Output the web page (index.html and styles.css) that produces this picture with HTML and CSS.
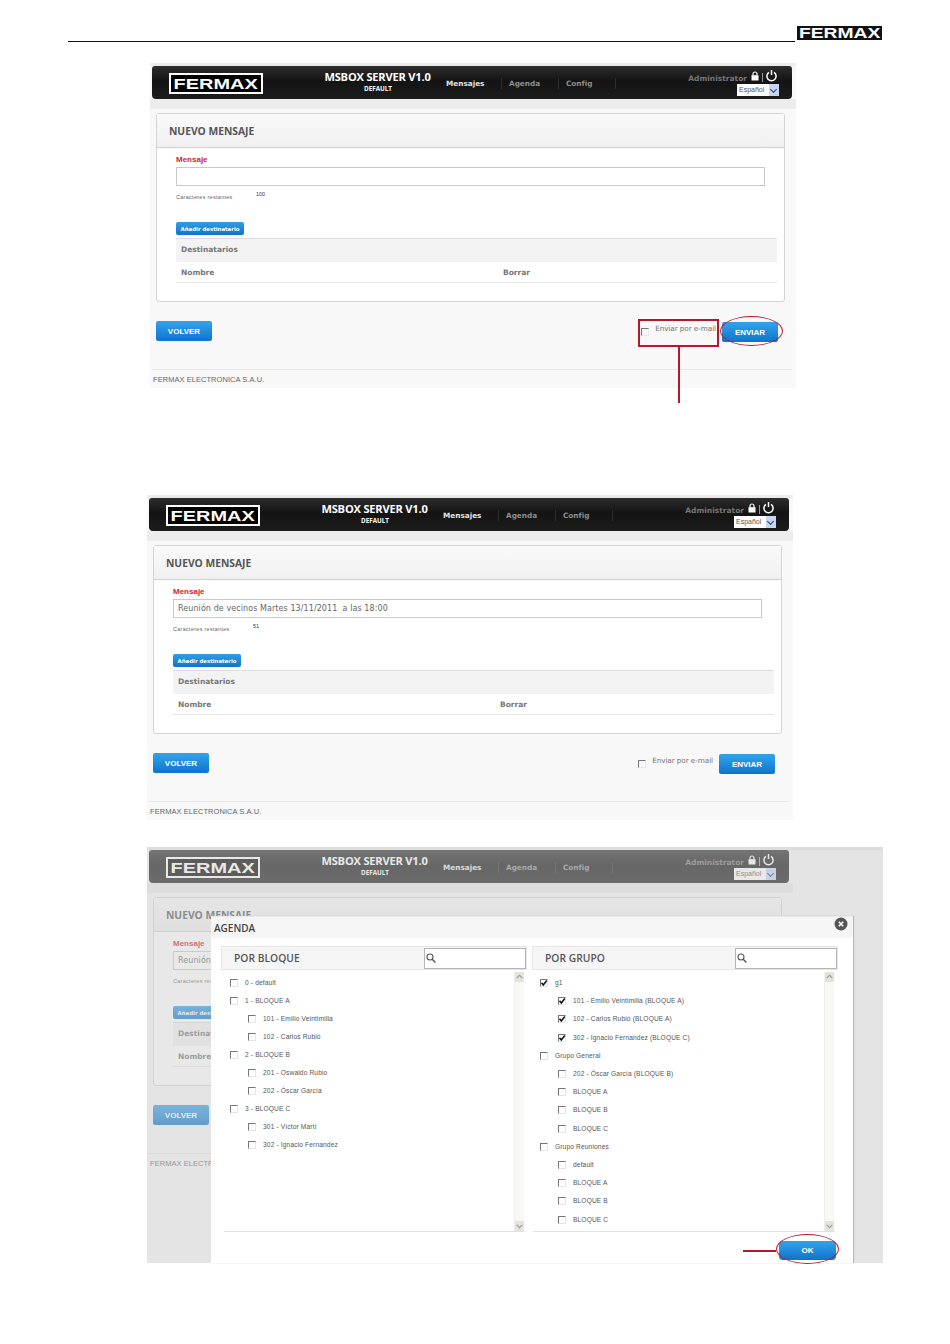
FILE: index.html
```html
<!DOCTYPE html>
<html lang="es">
<head>
<meta charset="utf-8">
<title>MSBOX SERVER</title>
<link rel="stylesheet" href="styles.css">
</head>
<body>
<header class="doc-head"><div class="doc-rule"></div><div class="doc-logo"><span class="wide">FERMAX</span></div></header>

<section class="shot shot-a">
  <div class="nav">
    <div class="logo"><span class="wide">FERMAX</span></div>
    <div class="brand"><div class="brand-name">MSBOX SERVER V1.0</div><div class="brand-sub">DEFAULT</div></div>
    <nav class="menu"><a class="menu-item active">Mensajes</a><a class="menu-item">Agenda</a><a class="menu-item">Config</a></nav>
    <div class="user">
      <div class="user-line"><span class="user-name">Administrator</span>
        <svg class="ic-lock" viewBox="0 0 8 10"><path d="M2 4.5V3a2 2 0 0 1 4 0v1.5" fill="none" stroke="#fff" stroke-width="1.2"/><rect x="0.5" y="4.2" width="7" height="5.3" fill="#fff"/></svg>
        <i class="user-sep"></i>
        <svg class="ic-power" viewBox="0 0 12 13"><path d="M3.2 3.2a5 5 0 1 0 5.6 0" fill="none" stroke="#fff" stroke-width="1.6"/><path d="M6 .5v5.5" stroke="#fff" stroke-width="1.6"/></svg>
      </div>
      <div class="lang"><span>Español</span><i class="lang-arrow"></i></div>
    </div>
  </div>
  <div class="stripe"></div>
  <div class="card">
    <div class="card-head">NUEVO MENSAJE</div>
    <div class="card-body">
      <div class="label">Mensaje</div>
      <div class="field"></div>
      <div class="count"><span class="count-label">Caracteres restantes</span><span class="count-num">100</span></div>
      <div class="btn-add">Añadir destinatario</div>
      <div class="table-head">Destinatarios</div>
      <div class="table-row"><span class="col-a">Nombre</span><span>Borrar</span></div>
    </div>
  </div>
  <div class="actions">
    <div class="btn">VOLVER</div>
    <div class="actions-right"><span class="box"></span><span class="mail">Enviar por e-mail</span><div class="btn">ENVIAR</div></div>
  </div>
  <footer class="foot">FERMAX ELECTRONICA S.A.U.</footer>
  <div class="mark-rect"></div>
  <div class="mark-line"></div>
  <div class="mark-oval"></div>
</section>

<section class="shot shot-b">
  <div class="nav">
    <div class="logo"><span class="wide">FERMAX</span></div>
    <div class="brand"><div class="brand-name">MSBOX SERVER V1.0</div><div class="brand-sub">DEFAULT</div></div>
    <nav class="menu"><a class="menu-item active">Mensajes</a><a class="menu-item">Agenda</a><a class="menu-item">Config</a></nav>
    <div class="user">
      <div class="user-line"><span class="user-name">Administrator</span>
        <svg class="ic-lock" viewBox="0 0 8 10"><path d="M2 4.5V3a2 2 0 0 1 4 0v1.5" fill="none" stroke="#fff" stroke-width="1.2"/><rect x="0.5" y="4.2" width="7" height="5.3" fill="#fff"/></svg>
        <i class="user-sep"></i>
        <svg class="ic-power" viewBox="0 0 12 13"><path d="M3.2 3.2a5 5 0 1 0 5.6 0" fill="none" stroke="#fff" stroke-width="1.6"/><path d="M6 .5v5.5" stroke="#fff" stroke-width="1.6"/></svg>
      </div>
      <div class="lang"><span>Español</span><i class="lang-arrow"></i></div>
    </div>
  </div>
  <div class="stripe"></div>
  <div class="card">
    <div class="card-head">NUEVO MENSAJE</div>
    <div class="card-body">
      <div class="label">Mensaje</div>
      <div class="field">Reunión de vecinos Martes 13/11/2011&nbsp; a las 18:00</div>
      <div class="count"><span class="count-label">Caracteres restantes</span><span class="count-num">51</span></div>
      <div class="btn-add">Añadir destinatario</div>
      <div class="table-head">Destinatarios</div>
      <div class="table-row"><span class="col-a">Nombre</span><span>Borrar</span></div>
    </div>
  </div>
  <div class="actions">
    <div class="btn">VOLVER</div>
    <div class="actions-right"><span class="box"></span><span class="mail">Enviar por e-mail</span><div class="btn">ENVIAR</div></div>
  </div>
  <footer class="foot">FERMAX ELECTRONICA S.A.U.</footer>
</section>

<section class="shot shot-c">
  <div class="nav">
    <div class="logo"><span class="wide">FERMAX</span></div>
    <div class="brand"><div class="brand-name">MSBOX SERVER V1.0</div><div class="brand-sub">DEFAULT</div></div>
    <nav class="menu"><a class="menu-item active">Mensajes</a><a class="menu-item">Agenda</a><a class="menu-item">Config</a></nav>
    <div class="user">
      <div class="user-line"><span class="user-name">Administrator</span>
        <svg class="ic-lock" viewBox="0 0 8 10"><path d="M2 4.5V3a2 2 0 0 1 4 0v1.5" fill="none" stroke="#fff" stroke-width="1.2"/><rect x="0.5" y="4.2" width="7" height="5.3" fill="#fff"/></svg>
        <i class="user-sep"></i>
        <svg class="ic-power" viewBox="0 0 12 13"><path d="M3.2 3.2a5 5 0 1 0 5.6 0" fill="none" stroke="#fff" stroke-width="1.6"/><path d="M6 .5v5.5" stroke="#fff" stroke-width="1.6"/></svg>
      </div>
      <div class="lang"><span>Español</span><i class="lang-arrow"></i></div>
    </div>
  </div>
  <div class="stripe"></div>
  <div class="card">
    <div class="card-head">NUEVO MENSAJE</div>
    <div class="card-body">
      <div class="label">Mensaje</div>
      <div class="field">Reunión de vecinos Martes 13/11/2011&nbsp; a las 18:00</div>
      <div class="count"><span class="count-label">Caracteres restantes</span><span class="count-num">51</span></div>
      <div class="btn-add">Añadir destinatario</div>
      <div class="table-head">Destinatarios</div>
      <div class="table-row"><span class="col-a">Nombre</span><span>Borrar</span></div>
    </div>
  </div>
  <div class="actions">
    <div class="btn">VOLVER</div>
  </div>
  <footer class="foot">FERMAX ELECTRONICA S.A.U.</footer>
  <div class="dim"></div>

  <div class="modal">
    <div class="modal-head">AGENDA</div>
    <svg class="modal-close" viewBox="0 0 14 14"><circle cx="7" cy="7" r="6.5" fill="#555"/><path d="M4.8 4.8l4.4 4.4M9.2 4.8l-4.4 4.4" stroke="#fff" stroke-width="1.6"/></svg>
    <div class="panels">
      <div class="panel">
        <div class="panel-head"><span>POR BLOQUE</span>
          <div class="search"><svg class="ic-search" viewBox="0 0 10 10"><circle cx="4" cy="4" r="3" fill="none" stroke="#555" stroke-width="1.1"/><path d="M6.2 6.2L9.4 9.4" stroke="#555" stroke-width="1.4"/></svg></div>
        </div>
        <div class="list">
          <div class="rows">
            <div class="row"><span class="box"></span>0 - default</div>
            <div class="row"><span class="box"></span>1 - BLOQUE A</div>
            <div class="row sub"><span class="box"></span>101 - Emilio Veintimilla</div>
            <div class="row sub"><span class="box"></span>102 - Carlos Rubió</div>
            <div class="row"><span class="box"></span>2 - BLOQUE B</div>
            <div class="row sub"><span class="box"></span>201 - Oswaldo Rubio</div>
            <div class="row sub"><span class="box"></span>202 - Óscar García</div>
            <div class="row"><span class="box"></span>3 - BLOQUE C</div>
            <div class="row sub"><span class="box"></span>301 - Víctor Martí</div>
            <div class="row sub"><span class="box"></span>302 - Ignacio Fernandez</div>
          </div>
          <div class="scroll"><i class="scroll-btn"><svg viewBox="0 0 8 8"><path d="M1.5 5L4 2.5 6.500 5" fill="none" stroke="#999"/></svg></i><i class="scroll-btn"><svg viewBox="0 0 8 8"><path d="M1.5 3L4 5.500 6.500 3" fill="none" stroke="#999"/></svg></i></div>
        </div>
      </div>
      <div class="panel panel-right">
        <div class="panel-head"><span>POR GRUPO</span>
          <div class="search"><svg class="ic-search" viewBox="0 0 10 10"><circle cx="4" cy="4" r="3" fill="none" stroke="#555" stroke-width="1.1"/><path d="M6.2 6.2L9.4 9.4" stroke="#555" stroke-width="1.4"/></svg></div>
        </div>
        <div class="list">
          <div class="rows">
            <div class="row"><span class="box on"><svg viewBox="0 0 8 8"><path d="M1.500 3.800L3.300 6 6.800 1.500" fill="none" stroke="#111" stroke-width="1.5"/></svg></span>g1</div>
            <div class="row sub"><span class="box on"><svg viewBox="0 0 8 8"><path d="M1.500 3.800L3.300 6 6.800 1.500" fill="none" stroke="#111" stroke-width="1.5"/></svg></span>101 - Emilio Veintimilla (BLOQUE A)</div>
            <div class="row sub"><span class="box on"><svg viewBox="0 0 8 8"><path d="M1.500 3.800L3.300 6 6.800 1.500" fill="none" stroke="#111" stroke-width="1.5"/></svg></span>102 - Carlos Rubió (BLOQUE A)</div>
            <div class="row sub"><span class="box on"><svg viewBox="0 0 8 8"><path d="M1.500 3.800L3.300 6 6.800 1.500" fill="none" stroke="#111" stroke-width="1.5"/></svg></span>302 - Ignacio Fernandez (BLOQUE C)</div>
            <div class="row"><span class="box"></span>Grupo General</div>
            <div class="row sub"><span class="box"></span>202 - Óscar García (BLOQUE B)</div>
            <div class="row sub"><span class="box"></span>BLOQUE A</div>
            <div class="row sub"><span class="box"></span>BLOQUE B</div>
            <div class="row sub"><span class="box"></span>BLOQUE C</div>
            <div class="row"><span class="box"></span>Grupo Reuniones</div>
            <div class="row sub"><span class="box"></span>default</div>
            <div class="row sub"><span class="box"></span>BLOQUE A</div>
            <div class="row sub"><span class="box"></span>BLOQUE B</div>
            <div class="row sub"><span class="box"></span>BLOQUE C</div>
          </div>
          <div class="scroll"><i class="scroll-btn"><svg viewBox="0 0 8 8"><path d="M1.5 5L4 2.5 6.500 5" fill="none" stroke="#999"/></svg></i><i class="scroll-btn"><svg viewBox="0 0 8 8"><path d="M1.5 3L4 5.500 6.500 3" fill="none" stroke="#999"/></svg></i></div>
        </div>
      </div>
    </div>
    <div class="modal-foot"><div class="btn">OK</div></div>
    <div class="ok-line"></div>
    <div class="ok-oval"></div>
  </div>
</section>
</body>
</html>
```
FILE: styles.css
```css
* { box-sizing: border-box; }
html, body { margin: 0; padding: 0; background: #fff; }
body { height: 1344px; overflow: hidden; padding-top: 26px; font-family: "Liberation Sans", Arial, sans-serif; color: #555; }

.wide { display: inline-block; transform: scaleX(1.33); transform-origin: center; white-space: nowrap; }

.doc-head { display: flex; width: 814px; height: 16px; margin-left: 68px; }
.doc-rule { flex: 1; border-bottom: 1px solid #111; margin-right: 2px; }
.doc-logo { width: 85px; height: 14px; background: #111; color: #fff; font: bold 14.500px/14px "Liberation Sans", sans-serif; text-align: center; overflow: hidden; }

.shot { position: relative; width: 646px; height: 325px; padding-top: 3px; background: #f8f8f8; box-shadow: inset 0 3px 0 #ececec; }
.shot-a { margin: 21px 0 0 150px; }
.shot-b { margin: 107px 0 0 147px; }
.shot-c { margin: 27px 0 0 147px; width: 736px; height: 416px; }

.nav { display: flex; align-items: flex-start; width: 640px; height: 33px; margin-left: 2px; padding-left: 17px; border-radius: 3px 3px 4px 4px; background: linear-gradient(#2d2d2d, #141414 45%, #1c1c1c); color: #fff; }
.logo { width: 94px; height: 21px; margin-top: 7px; border: 2px solid #fff; background: #000; font: bold 15px/17px "Liberation Sans", sans-serif; text-align: center; white-space: nowrap; }
.brand { width: 106px; margin: 4px 0 0 62px; text-align: center; }
.brand-name { font: 700 11.100px/14px "Open Sans", sans-serif; white-space: nowrap; letter-spacing: -.2px; margin-left: -1px; }
.brand-sub { font: 700 6.300px/9px "Open Sans", sans-serif; }
.menu { display: flex; margin: 12px 0 0 15px; }
.menu-item { width: 50px; padding-right: 5px; font: bold 7.300px/11px "DejaVu Sans", sans-serif; color: #8d8d8d; white-space: nowrap; border-right: 1px solid #2e2e2e; margin-right: 7px; }
.menu-item.active { width: 56px; color: #e4e4e4; }
.user { margin-left: auto; padding: 3px 13px 0 0; display: flex; flex-direction: column; align-items: flex-end; }
.user-line { display: flex; align-items: flex-end; height: 14px; margin-right: 2px; }
.user-name { font: bold 7.500px/9px "DejaVu Sans", sans-serif; color: #777; }
.ic-lock { width: 8px; height: 10px; margin: 0 0 2px 4px; }
.user-sep { width: 1px; height: 9px; margin: 0 3px 1px; background: #999; }
.ic-power { width: 11px; height: 13px; margin-bottom: 1px; }
.lang { display: flex; align-items: center; justify-content: space-between; width: 42px; height: 12px; margin-top: 1px; background: #fff; color: #555; font: 7px/12px "Liberation Sans", sans-serif; padding-left: 2px; }
.lang-arrow { width: 10px; height: 12px; background: #c6d6f2; position: relative; }
.lang-arrow::after { content: ""; position: absolute; left: 2px; top: 3px; width: 4px; height: 4px; border-right: 1.500px solid #27408b; border-bottom: 1.500px solid #27408b; transform: rotate(45deg); }
.stripe { width: 646px; height: 10px; background: #ececec; }

.card { width: 629px; height: 189px; margin: 4px 0 0 6px; background: #fff; border: 1px solid #d4d4d4; border-radius: 3px; }
.card-head { height: 34px; padding-left: 12px; background: linear-gradient(#fafafa, #f0f0f0); border-bottom: 1px solid #cfcfcf; font: 700 10.300px/34px "Open Sans", sans-serif; color: #555; }
.card-body { padding: 6px 7px 0 19px; }
.label { height: 13px; font: bold 8px/12px "Liberation Sans", sans-serif; color: #d8202c; }
.field { width: 589px; height: 19px; border: 1px solid #c9c9c9; padding-left: 4px; font: 8px/18px "DejaVu Sans", sans-serif; color: #666; letter-spacing: .08px; white-space: nowrap; }
.count { display: flex; height: 36px; padding-top: 4px; }
.count-label { width: 80px; padding-top: 3px; font: 5.500px/8px "Liberation Sans", sans-serif; letter-spacing: .28px; color: #666; }
.count-num { font: 5.500px/8px "Liberation Sans", sans-serif; color: #336; }
.btn-add { width: 68px; height: 13px; background: linear-gradient(#2f9fe8, #0f74c9); border-radius: 2px; color: #fff; font: bold 5.400px/14px "DejaVu Sans", sans-serif; text-align: center; white-space: nowrap; }
.table-head { height: 24px; margin-top: 3px; padding-left: 5px; background: #f3f3f3; border-top: 1px solid #ddd; font: bold 7.500px/22px "DejaVu Sans", sans-serif; color: #777; }
.table-row { display: flex; height: 21px; padding-left: 5px; border-bottom: 1px solid #e5e5e5; font: bold 7.500px/22px "DejaVu Sans", sans-serif; color: #777; }
.col-a { width: 322px; }

.actions { display: flex; justify-content: space-between; width: 622px; height: 21px; margin: 19px 0 0 6px; }
.actions-right { display: flex; align-items: flex-start; }
.btn { width: 56px; height: 20px; background: linear-gradient(#2f9fe8 10%, #0f74c9); border-radius: 2px; color: #fff; font: bold 8px/21px "Liberation Sans", sans-serif; text-align: center; }
.actions-right .box { margin: 7px 6px 0 0; }
.mail { margin: 2px 6px 0 0; font: 7.300px/12px "DejaVu Sans", sans-serif; color: #777; letter-spacing: -.1px; white-space: nowrap; }
.actions-right .btn { margin-top: 1px; }
.foot { width: 640px; margin: 27px 0 0 2px; padding-top: 5px; border-top: 1px solid #e6e6e6; font: 7.500px/10px "Liberation Sans", sans-serif; letter-spacing: .05px; padding-left: 1px; color: #666; white-space: nowrap; }

.box { display: inline-block; flex: none; width: 8px; height: 8px; border: 1px solid #e6e6e6; border-top-color: #777; border-left-color: #777; }
.box svg { display: block; width: 8px; height: 8px; margin: -1px 0 0 -1px; }

.mark-rect { position: absolute; left: 488px; top: 256px; width: 81px; height: 28px; border: 2px solid #b5172b; }
.mark-line { position: absolute; left: 528px; top: 284px; width: 2px; height: 56px; background: #b5172b; }
.mark-oval { position: absolute; left: 570px; top: 253px; width: 63px; height: 30px; border: 1.500px solid #c01830; border-radius: 50%; }

.dim { position: absolute; inset: 0; background: rgba(203, 203, 203, .45); }

.modal { position: absolute; left: 64px; top: 69px; width: 642px; height: 347px; background: #fff; box-shadow: 1px 0 1px #bbb; }
.modal-head { height: 22px; padding-left: 3px; background: #f5f5f5; border-top: 1px solid #e8e8e8; font: 600 10px/23px "Open Sans", sans-serif; color: #444; }
.modal-close { position: absolute; left: 623px; top: 1px; width: 14px; height: 14px; }
.panels { display: grid; grid-template-columns: 306px 306px; gap: 5px; padding: 8px 0 0 10px; }
.panel-head { display: flex; justify-content: space-between; height: 24px; padding: 1px 0 0 12px; background: #f5f5f5; border: 1px solid #e6e6e6; font: 600 10.300px/21px "Open Sans", sans-serif; color: #555; }
.search { width: 102px; height: 21px; background: #fff; border: 1px solid #b5b5b5; }
.ic-search { display: block; width: 10px; height: 10px; margin: 4px 0 0 1px; }
.list { display: flex; justify-content: space-between; width: 301px; height: 260px; margin: 2px 0 0 3px; border-bottom: 1px solid #e2e2e2; }
.panel-right .list { width: 302px; margin-left: 1px; }
.rows { padding: 2px 0 0 6px; }
.panel-right .rows { padding-left: 7px; }
.row { display: flex; align-items: center; height: 18px; font: 6.600px/18px "Liberation Sans", sans-serif; letter-spacing: .15px; color: #555; white-space: nowrap; }
.panel-right .row { height: 18.200px; }
.row .box { margin-right: 7px; }
.row.sub { padding-left: 18px; }
.scroll { display: flex; flex-direction: column; justify-content: space-between; width: 10px; margin-right: 1px; background: #f8f8f4; border-left: 1px solid #efefe8; }
.scroll-btn { display: block; width: 9px; height: 10px; background: #e4e4dc; }
.scroll-btn svg { display: block; width: 9px; height: 10px; }
.modal-foot { display: flex; justify-content: flex-end; padding: 9px 17px 0 0; }
.modal-foot .btn { width: 57px; height: 19px; line-height: 20px; border-radius: 4px; }
.ok-line { position: absolute; left: 532px; top: 334px; width: 33px; height: 2px; background: #b5172b; }
.ok-oval { position: absolute; left: 565px; top: 318px; width: 63px; height: 30px; border: 1.500px solid #c01830; border-radius: 50%; }
```
